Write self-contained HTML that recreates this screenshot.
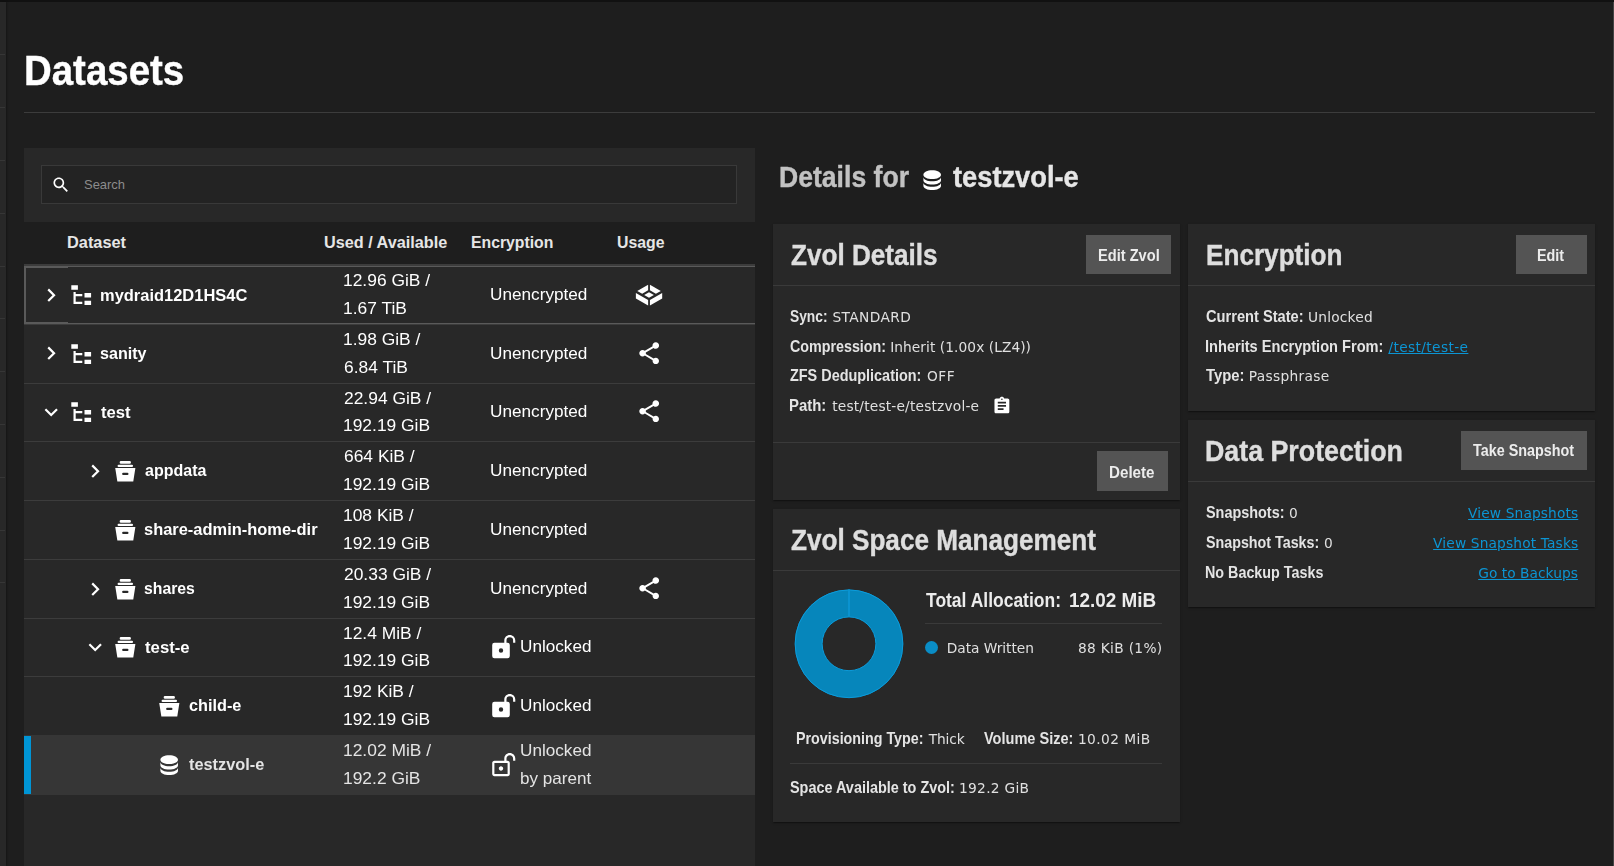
<!DOCTYPE html>
<html lang="en">
<head>
<meta charset="utf-8">
<title>Datasets - TrueNAS</title>
<style>

html,body{margin:0;padding:0}
body{width:1614px;height:866px;overflow:hidden;background:#1e1e1e;position:relative;font-family:"Liberation Sans",sans-serif;color:#fff}
.abs,.t,svg.i{position:absolute}
#txt{position:absolute;left:0;top:0;width:1614px;height:866px;will-change:transform}
.t{white-space:nowrap;line-height:normal;margin:0;transform-origin:0 0;display:block}
h1.t,h2.t,h3.t{font-weight:700;-webkit-text-stroke:.4px currentColor}
.b{-webkit-text-stroke:.2px currentColor}
svg.i{fill:#fff;overflow:visible}
.card{position:absolute;background:#282828;box-shadow:0 2px 1px -1px rgba(0,0,0,.2),0 1px 1px 0 rgba(0,0,0,.14),0 1px 3px 0 rgba(0,0,0,.12)}
.hr{position:absolute;height:1px;background:#3a3a3a}
.btn{position:absolute;background:#545454;border:0;padding:0;margin:0}
.row{position:absolute;left:24px;width:731px}
.sep{position:absolute;left:24px;width:731px;height:1px;background:#3c3c3c}

</style>
</head>
<body>
<div class="abs" style="left:0px;top:0px;width:1614px;height:2px;background:#111;"></div>
<div class="abs" style="left:0px;top:2px;width:6px;height:864px;background:#282828;box-shadow:1px 0 2px rgba(0,0,0,.28);"></div>
<div class="abs" style="left:0px;top:54px;width:5px;height:1px;background:#363636;"></div>
<div class="abs" style="left:0px;top:107px;width:5px;height:1px;background:#363636;"></div>
<div class="abs" style="left:0px;top:160px;width:5px;height:1px;background:#363636;"></div>
<div class="abs" style="left:0px;top:213px;width:5px;height:1px;background:#363636;"></div>
<div class="abs" style="left:0px;top:266px;width:5px;height:1px;background:#363636;"></div>
<div class="abs" style="left:0px;top:318px;width:5px;height:1px;background:#363636;"></div>
<div class="abs" style="left:0px;top:371px;width:5px;height:1px;background:#363636;"></div>
<div class="abs" style="left:0px;top:424px;width:5px;height:1px;background:#363636;"></div>
<div class="abs" style="left:0px;top:477px;width:5px;height:1px;background:#363636;"></div>
<div class="abs" style="left:0px;top:530px;width:5px;height:1px;background:#363636;"></div>
<div class="abs" style="left:0px;top:582px;width:5px;height:1px;background:#363636;"></div>
<div class="abs" style="left:1613px;top:2px;width:1px;height:864px;background:#444;"></div>
<div class="abs" style="left:24px;top:112px;width:1571px;height:1px;background:#3c3c3c;"></div>
<div class="abs" style="left:24px;top:148px;width:731px;height:718px;background:#282828;"></div>
<div class="abs" style="left:41px;top:165px;width:694px;height:37px;background:#232323;border:1px solid #393939;"></div>
<div class="abs" style="left:24px;top:222px;width:731px;height:42px;background:#1e1e1e;"></div>
<div class="abs" style="left:24px;top:264px;width:731px;height:2px;background:#3c3c3c;"></div>
<div class="abs" style="left:24px;top:324px;width:731px;height:1px;background:#3c3c3c;"></div>
<div class="abs" style="left:24px;top:383px;width:731px;height:1px;background:#3c3c3c;"></div>
<div class="abs" style="left:24px;top:441px;width:731px;height:1px;background:#3c3c3c;"></div>
<div class="abs" style="left:24px;top:500px;width:731px;height:1px;background:#3c3c3c;"></div>
<div class="abs" style="left:24px;top:559px;width:731px;height:1px;background:#3c3c3c;"></div>
<div class="abs" style="left:24px;top:618px;width:731px;height:1px;background:#3c3c3c;"></div>
<div class="abs" style="left:24px;top:676px;width:731px;height:1px;background:#3c3c3c;"></div>
<div class="abs" style="left:24px;top:266px;width:731px;height:1px;background:#5a5a5a;"></div>
<div class="abs" style="left:24px;top:267px;width:44px;height:1px;background:#5a5a5a;"></div>
<div class="abs" style="left:24px;top:266px;width:2px;height:58px;background:#5a5a5a;"></div>
<div class="abs" style="left:24px;top:323px;width:731px;height:1px;background:#5a5a5a;"></div>
<div class="abs" style="left:24px;top:322px;width:44px;height:1px;background:#5a5a5a;"></div>
<div class="abs" style="left:24px;top:735px;width:731px;height:60px;background:#363636;"></div>
<div class="abs" style="left:24px;top:736px;width:7px;height:58px;background:#0095d5;"></div>
<div class="card" style="left:773px;top:224px;width:407px;height:276px"></div>
<div class="card" style="left:773px;top:509px;width:407px;height:312.5px"></div>
<div class="card" style="left:1188px;top:224px;width:407px;height:186.5px"></div>
<div class="card" style="left:1188px;top:420px;width:407px;height:186.5px"></div>
<div class="abs" style="left:773px;top:285px;width:407px;height:1px;background:#3a3a3a;"></div>
<div class="abs" style="left:773px;top:442px;width:407px;height:1px;background:#3a3a3a;"></div>
<div class="abs" style="left:773px;top:570px;width:407px;height:1px;background:#3a3a3a;"></div>
<div class="abs" style="left:1188px;top:285px;width:407px;height:1px;background:#3a3a3a;"></div>
<div class="abs" style="left:1188px;top:481px;width:407px;height:1px;background:#3a3a3a;"></div>
<div class="abs" style="left:925px;top:623px;width:237px;height:1px;background:#3a3a3a;"></div>
<div class="abs" style="left:790px;top:763px;width:372px;height:1px;background:#3a3a3a;"></div>
<div class="abs" style="left:1086px;top:235px;width:85px;height:39px;background:#545454;"></div>
<div class="abs" style="left:1516px;top:235px;width:71px;height:39px;background:#545454;"></div>
<div class="abs" style="left:1461px;top:431px;width:126px;height:39px;background:#545454;"></div>
<div class="abs" style="left:1097px;top:451px;width:71px;height:40px;background:#545454;"></div>
<svg class="i" style="left:51.00px;top:174.90px" width="19.8" height="19.8" viewBox="0 0 24 24" fill="#fff"><path fill-rule="evenodd" d="M15.5 14h-.79l-.28-.27C15.41 12.59 16 11.11 16 9.5 16 5.91 13.09 3 9.5 3S3 5.91 3 9.5 5.91 16 9.5 16c1.61 0 3.09-.59 4.23-1.57l.27.28v.79l5 4.99L20.49 19l-4.99-5zm-6 0C7.01 14 5 11.99 5 9.5S7.01 5 9.5 5 14 7.01 14 9.5 11.99 14 9.5 14z"/></svg>
<svg class="i" style="left:37.90px;top:281.70px" width="26.4" height="26.4" viewBox="0 0 24 24" fill="#fff"><path fill-rule="evenodd" d="M10 6L8.59 7.41 13.17 12l-4.58 4.59L10 18l6-6z"/></svg>
<svg class="i" style="left:67.70px;top:282.20px" width="26.4" height="26.4" viewBox="0 0 24 24" fill="#fff"><path fill-rule="evenodd" d="M3,3H9V7H3V3M15,10H21V14H15V10M15,17H21V21H15V17M13,13H7V18H13V20H7L5,20V9H7V11H13V13Z"/></svg>
<svg class="i" style="left:37.90px;top:339.70px" width="26.4" height="26.4" viewBox="0 0 24 24" fill="#fff"><path fill-rule="evenodd" d="M10 6L8.59 7.41 13.17 12l-4.58 4.59L10 18l6-6z"/></svg>
<svg class="i" style="left:67.70px;top:341.20px" width="26.4" height="26.4" viewBox="0 0 24 24" fill="#fff"><path fill-rule="evenodd" d="M3,3H9V7H3V3M15,10H21V14H15V10M15,17H21V21H15V17M13,13H7V18H13V20H7L5,20V9H7V11H13V13Z"/></svg>
<svg class="i" style="left:635.80px;top:339.80px" width="26.4" height="26.4" viewBox="0 0 24 24" fill="#fff"><path fill-rule="evenodd" d="M18 16.08c-.76 0-1.44.3-1.96.77L8.91 12.7c.05-.23.09-.46.09-.7s-.04-.47-.09-.7l7.05-4.11c.54.5 1.25.81 2.04.81 1.66 0 3-1.34 3-3s-1.34-3-3-3-3 1.34-3 3c0 .24.04.47.09.7L8.04 9.81C7.5 9.31 6.79 9 6 9c-1.66 0-3 1.34-3 3s1.34 3 3 3c.79 0 1.5-.31 2.04-.81l7.12 4.16c-.05.21-.08.43-.08.65 0 1.61 1.31 2.92 2.92 2.92 1.61 0 2.92-1.31 2.92-2.92s-1.31-2.92-2.92-2.92z"/></svg>
<svg class="i" style="left:37.90px;top:398.70px" width="26.4" height="26.4" viewBox="0 0 24 24" fill="#fff"><path fill-rule="evenodd" d="M16.59 8.59L12 13.17 7.41 8.59 6 10l6 6 6-6z"/></svg>
<svg class="i" style="left:67.70px;top:399.20px" width="26.4" height="26.4" viewBox="0 0 24 24" fill="#fff"><path fill-rule="evenodd" d="M3,3H9V7H3V3M15,10H21V14H15V10M15,17H21V21H15V17M13,13H7V18H13V20H7L5,20V9H7V11H13V13Z"/></svg>
<svg class="i" style="left:635.80px;top:397.80px" width="26.4" height="26.4" viewBox="0 0 24 24" fill="#fff"><path fill-rule="evenodd" d="M18 16.08c-.76 0-1.44.3-1.96.77L8.91 12.7c.05-.23.09-.46.09-.7s-.04-.47-.09-.7l7.05-4.11c.54.5 1.25.81 2.04.81 1.66 0 3-1.34 3-3s-1.34-3-3-3-3 1.34-3 3c0 .24.04.47.09.7L8.04 9.81C7.5 9.31 6.79 9 6 9c-1.66 0-3 1.34-3 3s1.34 3 3 3c.79 0 1.5-.31 2.04-.81l7.12 4.16c-.05.21-.08.43-.08.65 0 1.61 1.31 2.92 2.92 2.92 1.61 0 2.92-1.31 2.92-2.92s-1.31-2.92-2.92-2.92z"/></svg>
<svg class="i" style="left:82.00px;top:457.70px" width="26.4" height="26.4" viewBox="0 0 24 24" fill="#fff"><path fill-rule="evenodd" d="M10 6L8.59 7.41 13.17 12l-4.58 4.59L10 18l6-6z"/></svg>
<svg class="i" style="left:111.80px;top:457.50px" width="26.4" height="26.4" viewBox="0 0 24 24" fill="#fff"><path fill-rule="evenodd" d="M8.2 2.8h7.8a1.25 1.25 0 0 1 0 2.5H8.2a1.25 1.25 0 0 1 0-2.5zM6.1 6.15h12a1.05 1.05 0 0 1 0 2.1h-12a1.05 1.05 0 0 1 0-2.1zM2.93 9.1h18.34l-1.93 12.2H4.86zM10.2 13.45a1 1 0 0 0 0 2h3.8a1 1 0 0 0 0-2z"/></svg>
<svg class="i" style="left:111.80px;top:516.50px" width="26.4" height="26.4" viewBox="0 0 24 24" fill="#fff"><path fill-rule="evenodd" d="M8.2 2.8h7.8a1.25 1.25 0 0 1 0 2.5H8.2a1.25 1.25 0 0 1 0-2.5zM6.1 6.15h12a1.05 1.05 0 0 1 0 2.1h-12a1.05 1.05 0 0 1 0-2.1zM2.93 9.1h18.34l-1.93 12.2H4.86zM10.2 13.45a1 1 0 0 0 0 2h3.8a1 1 0 0 0 0-2z"/></svg>
<svg class="i" style="left:82.00px;top:575.70px" width="26.4" height="26.4" viewBox="0 0 24 24" fill="#fff"><path fill-rule="evenodd" d="M10 6L8.59 7.41 13.17 12l-4.58 4.59L10 18l6-6z"/></svg>
<svg class="i" style="left:111.80px;top:575.50px" width="26.4" height="26.4" viewBox="0 0 24 24" fill="#fff"><path fill-rule="evenodd" d="M8.2 2.8h7.8a1.25 1.25 0 0 1 0 2.5H8.2a1.25 1.25 0 0 1 0-2.5zM6.1 6.15h12a1.05 1.05 0 0 1 0 2.1h-12a1.05 1.05 0 0 1 0-2.1zM2.93 9.1h18.34l-1.93 12.2H4.86zM10.2 13.45a1 1 0 0 0 0 2h3.8a1 1 0 0 0 0-2z"/></svg>
<svg class="i" style="left:635.80px;top:574.80px" width="26.4" height="26.4" viewBox="0 0 24 24" fill="#fff"><path fill-rule="evenodd" d="M18 16.08c-.76 0-1.44.3-1.96.77L8.91 12.7c.05-.23.09-.46.09-.7s-.04-.47-.09-.7l7.05-4.11c.54.5 1.25.81 2.04.81 1.66 0 3-1.34 3-3s-1.34-3-3-3-3 1.34-3 3c0 .24.04.47.09.7L8.04 9.81C7.5 9.31 6.79 9 6 9c-1.66 0-3 1.34-3 3s1.34 3 3 3c.79 0 1.5-.31 2.04-.81l7.12 4.16c-.05.21-.08.43-.08.65 0 1.61 1.31 2.92 2.92 2.92 1.61 0 2.92-1.31 2.92-2.92s-1.31-2.92-2.92-2.92z"/></svg>
<svg class="i" style="left:82.00px;top:633.70px" width="26.4" height="26.4" viewBox="0 0 24 24" fill="#fff"><path fill-rule="evenodd" d="M16.59 8.59L12 13.17 7.41 8.59 6 10l6 6 6-6z"/></svg>
<svg class="i" style="left:111.80px;top:633.50px" width="26.4" height="26.4" viewBox="0 0 24 24" fill="#fff"><path fill-rule="evenodd" d="M8.2 2.8h7.8a1.25 1.25 0 0 1 0 2.5H8.2a1.25 1.25 0 0 1 0-2.5zM6.1 6.15h12a1.05 1.05 0 0 1 0 2.1h-12a1.05 1.05 0 0 1 0-2.1zM2.93 9.1h18.34l-1.93 12.2H4.86zM10.2 13.45a1 1 0 0 0 0 2h3.8a1 1 0 0 0 0-2z"/></svg>
<svg class="i" style="left:489.80px;top:634.00px" width="26.4" height="26.4" viewBox="0 0 24 24" fill="#fff"><path fill-rule="evenodd" d="M18,1C15.24,1 13,3.24 13,6V8H4A2,2 0 0,0 2,10V20A2,2 0 0,0 4,22H16A2,2 0 0,0 18,20V10A2,2 0 0,0 16,8H15V6A3,3 0 0,1 18,3A3,3 0 0,1 21,6V8H23V6C23,3.24 20.76,1 18,1M10,13A2,2 0 0,1 12,15A2,2 0 0,1 10,17A2,2 0 0,1 8,15A2,2 0 0,1 10,13Z"/></svg>
<svg class="i" style="left:155.90px;top:692.50px" width="26.4" height="26.4" viewBox="0 0 24 24" fill="#fff"><path fill-rule="evenodd" d="M8.2 2.8h7.8a1.25 1.25 0 0 1 0 2.5H8.2a1.25 1.25 0 0 1 0-2.5zM6.1 6.15h12a1.05 1.05 0 0 1 0 2.1h-12a1.05 1.05 0 0 1 0-2.1zM2.93 9.1h18.34l-1.93 12.2H4.86zM10.2 13.45a1 1 0 0 0 0 2h3.8a1 1 0 0 0 0-2z"/></svg>
<svg class="i" style="left:489.80px;top:693.00px" width="26.4" height="26.4" viewBox="0 0 24 24" fill="#fff"><path fill-rule="evenodd" d="M18,1C15.24,1 13,3.24 13,6V8H4A2,2 0 0,0 2,10V20A2,2 0 0,0 4,22H16A2,2 0 0,0 18,20V10A2,2 0 0,0 16,8H15V6A3,3 0 0,1 18,3A3,3 0 0,1 21,6V8H23V6C23,3.24 20.76,1 18,1M10,13A2,2 0 0,1 12,15A2,2 0 0,1 10,17A2,2 0 0,1 8,15A2,2 0 0,1 10,13Z"/></svg>
<svg class="i" style="left:155.90px;top:751.70px" width="26.4" height="26.4" viewBox="0 0 24 24" fill="#e4e4e4"><path fill-rule="evenodd" d="M12,3C7.58,3 4,4.79 4,7C4,9.21 7.58,11 12,11C16.42,11 20,9.21 20,7C20,4.79 16.42,3 12,3M4,9V12C4,14.21 7.58,16 12,16C16.42,16 20,14.21 20,12V9C20,11.21 16.42,13 12,13C7.58,13 4,11.21 4,9M4,14V17C4,19.21 7.58,21 12,21C16.42,21 20,19.21 20,17V14C20,16.21 16.42,18 12,18C7.58,18 4,16.21 4,14Z"/></svg>
<svg class="i" style="left:489.80px;top:752.00px" width="26.4" height="26.4" viewBox="0 0 24 24" fill="#e4e4e4"><path fill-rule="evenodd" d="M10,13C11.1,13 12,13.89 12,15C12,16.11 11.11,17 10,17C8.9,17 8,16.11 8,15C8,13.9 8.9,13 10,13M18,1C15.24,1 13,3.24 13,6V8H4C2.9,8 2,8.9 2,10V20C2,21.1 2.9,22 4,22H16C17.1,22 18,21.1 18,20V10C18,8.9 17.1,8 16,8H15V6C15,4.34 16.34,3 18,3C19.66,3 21,4.34 21,6V8H23V6C23,3.24 20.76,1 18,1M16,10V20H4V10H16Z"/></svg>
<svg class="i" style="left:625px;top:275px" width="50" height="40" viewBox="0 0 50 40" fill="#fff"><polygon points="12.25,16.08 23.1,9.8 23.1,15.25 17.19,18.67"/><polygon points="35.8,16.08 24.95,9.8 24.95,15.25 30.87,18.67"/><polygon points="19.2,20.1 24.03,17.2 28.9,20.1 24.03,22.87"/><polygon points="10.86,18.02 23.1,24.95 23.1,30.5 10.86,23.57"/><polygon points="37.2,18.02 24.95,24.95 24.95,30.5 37.2,23.57"/></svg>
<svg class="i" style="left:918.50px;top:167.10px" width="26.4" height="26.4" viewBox="0 0 24 24" fill="#e6e6e6"><path fill-rule="evenodd" d="M12,3C7.58,3 4,4.79 4,7C4,9.21 7.58,11 12,11C16.42,11 20,9.21 20,7C20,4.79 16.42,3 12,3M4,9V12C4,14.21 7.58,16 12,16C16.42,16 20,14.21 20,12V9C20,11.21 16.42,13 12,13C7.58,13 4,11.21 4,9M4,14V17C4,19.21 7.58,21 12,21C16.42,21 20,19.21 20,17V14C20,16.21 16.42,18 12,18C7.58,18 4,16.21 4,14Z"/></svg>
<svg class="i" style="left:991.60px;top:396.20px" width="19.8" height="19.8" viewBox="0 0 24 24" fill="#e6e6e6"><path fill-rule="evenodd" d="M19 3h-4.18C14.4 1.84 13.3 1 12 1c-1.3 0-2.4.84-2.82 2H5c-1.1 0-2 .9-2 2v14c0 1.1.9 2 2 2h14c1.1 0 2-.9 2-2V5c0-1.1-.9-2-2-2zm-7 0c.55 0 1 .45 1 1s-.45 1-1 1-1-.45-1-1 .45-1 1-1zm2 14H7v-2h7v2zm3-4H7v-2h10v2zm0-4H7V7h10v2z"/></svg>
<svg class="i" style="left:789px;top:584px" width="120" height="120" viewBox="0 0 120 120"><circle cx="60" cy="59.8" r="40.45" fill="none" stroke="#0686bb" stroke-width="27.1"/><circle cx="60" cy="59.8" r="53.9" fill="none" stroke="#0b9cdc" stroke-width="1"/><circle cx="60" cy="59.8" r="26.9" fill="none" stroke="#0b9cdc" stroke-width="1"/><rect x="59" y="5.5" width="2" height="27.4" fill="#0a93d0"/></svg>
<svg class="i" style="left:924.8px;top:641.1px" width="13" height="13" viewBox="0 0 13 13"><circle cx="6.5" cy="6.5" r="6.5" fill="#0a8dc6"/></svg>
<span class="t" style="left:83.6px;top:177px;font-size:13.3px;color:#8c8c8c;transform:scaleX(0.9738);">Search</span>
<span class="t" style="left:66.8px;top:233px;font-size:17px;font-weight:700;color:#e6e6e6;transform:scaleX(0.9607);">Dataset</span>
<span class="t" style="left:323.9px;top:233px;font-size:17px;font-weight:700;color:#e6e6e6;transform:scaleX(0.9547);">Used / Available</span>
<span class="t" style="left:470.7px;top:233px;font-size:17px;font-weight:700;color:#e6e6e6;transform:scaleX(0.9276);">Encryption</span>
<span class="t" style="left:616.8px;top:233px;font-size:17px;font-weight:700;color:#e6e6e6;transform:scaleX(0.9300);">Usage</span>
<div id="txt">
<h1 class="t" style="left:24.3px;top:47px;font-size:42.5px;transform:scaleX(0.9040);">Datasets</h1>
<span class="t" style="left:99.9px;top:286px;font-size:17px;font-weight:700;transform:scaleX(0.9682);">mydraid12D1HS4C</span>
<span class="t" style="left:342.9px;top:271px;font-size:16.5px;transform:scaleX(1.055);">12.96 GiB /</span>
<span class="t" style="left:342.9px;top:299px;font-size:16.5px;transform:scaleX(1.055);">1.67 TiB</span>
<span class="t" style="left:490.0px;top:285px;font-size:16.5px;transform:scaleX(1.0413);">Unencrypted</span>
<span class="t" style="left:100.0px;top:344px;font-size:17px;font-weight:700;transform:scaleX(0.9479);">sanity</span>
<span class="t" style="left:342.9px;top:330px;font-size:16.5px;transform:scaleX(1.055);">1.98 GiB /</span>
<span class="t" style="left:344.0px;top:358px;font-size:16.5px;transform:scaleX(1.055);">6.84 TiB</span>
<span class="t" style="left:490.0px;top:344px;font-size:16.5px;transform:scaleX(1.0413);">Unencrypted</span>
<span class="t" style="left:100.9px;top:403px;font-size:17px;font-weight:700;transform:scaleX(0.9800);">test</span>
<span class="t" style="left:344.0px;top:389px;font-size:16.5px;transform:scaleX(1.055);">22.94 GiB /</span>
<span class="t" style="left:342.9px;top:416px;font-size:16.5px;transform:scaleX(1.055);">192.19 GiB</span>
<span class="t" style="left:490.0px;top:402px;font-size:16.5px;transform:scaleX(1.0413);">Unencrypted</span>
<span class="t" style="left:145.0px;top:461px;font-size:17px;font-weight:700;transform:scaleX(0.9424);">appdata</span>
<span class="t" style="left:344.0px;top:447px;font-size:16.5px;transform:scaleX(1.055);">664 KiB /</span>
<span class="t" style="left:342.9px;top:475px;font-size:16.5px;transform:scaleX(1.055);">192.19 GiB</span>
<span class="t" style="left:490.0px;top:461px;font-size:16.5px;transform:scaleX(1.0413);">Unencrypted</span>
<span class="t" style="left:144.0px;top:520px;font-size:17px;font-weight:700;transform:scaleX(0.9670);">share-admin-home-dir</span>
<span class="t" style="left:342.9px;top:506px;font-size:16.5px;transform:scaleX(1.055);">108 KiB /</span>
<span class="t" style="left:342.9px;top:534px;font-size:16.5px;transform:scaleX(1.055);">192.19 GiB</span>
<span class="t" style="left:490.0px;top:520px;font-size:16.5px;transform:scaleX(1.0413);">Unencrypted</span>
<span class="t" style="left:144.1px;top:579px;font-size:17px;font-weight:700;transform:scaleX(0.9278);">shares</span>
<span class="t" style="left:344.0px;top:565px;font-size:16.5px;transform:scaleX(1.055);">20.33 GiB /</span>
<span class="t" style="left:342.9px;top:593px;font-size:16.5px;transform:scaleX(1.055);">192.19 GiB</span>
<span class="t" style="left:490.0px;top:579px;font-size:16.5px;transform:scaleX(1.0413);">Unencrypted</span>
<span class="t" style="left:145.0px;top:638px;font-size:17px;font-weight:700;transform:scaleX(0.9844);">test-e</span>
<span class="t" style="left:342.9px;top:624px;font-size:16.5px;transform:scaleX(1.055);">12.4 MiB /</span>
<span class="t" style="left:342.9px;top:651px;font-size:16.5px;transform:scaleX(1.055);">192.19 GiB</span>
<span class="t" style="left:520.3px;top:637px;font-size:16.5px;transform:scaleX(1.0388);">Unlocked</span>
<span class="t" style="left:189.1px;top:696px;font-size:17px;font-weight:700;transform:scaleX(0.9564);">child-e</span>
<span class="t" style="left:342.9px;top:682px;font-size:16.5px;transform:scaleX(1.055);">192 KiB /</span>
<span class="t" style="left:342.9px;top:710px;font-size:16.5px;transform:scaleX(1.055);">192.19 GiB</span>
<span class="t" style="left:520.3px;top:696px;font-size:16.5px;transform:scaleX(1.0388);">Unlocked</span>
<span class="t" style="left:189.1px;top:755px;font-size:17px;font-weight:700;color:#e4e4e4;transform:scaleX(0.9603);">testzvol-e</span>
<span class="t" style="left:342.9px;top:741px;font-size:16.5px;color:#e4e4e4;transform:scaleX(1.055);">12.02 MiB /</span>
<span class="t" style="left:342.9px;top:769px;font-size:16.5px;color:#e4e4e4;transform:scaleX(1.055);">192.2 GiB</span>
<span class="t" style="left:520.3px;top:741px;font-size:16.5px;color:#e4e4e4;transform:scaleX(1.0388);">Unlocked</span>
<span class="t" style="left:520.3px;top:769px;font-size:16.5px;color:#e4e4e4;transform:scaleX(1.0338);">by parent</span>
<h2 class="t" style="left:778.9px;top:161px;font-size:29.2px;color:#c2c2c2;transform:scaleX(0.9106);">Details for</h2>
<h2 class="t" style="left:953.1px;top:161px;font-size:29.2px;color:#e6e6e6;transform:scaleX(0.9336);">testzvol-e</h2>
<h3 class="t" style="left:790.9px;top:239px;font-size:29.2px;color:#dedede;transform:scaleX(0.8945);">Zvol Details</h3>
<h3 class="t" style="left:1205.6px;top:239px;font-size:29.2px;color:#dedede;transform:scaleX(0.8953);">Encryption</h3>
<h3 class="t" style="left:1205.4px;top:435px;font-size:29.2px;color:#dedede;transform:scaleX(0.9175);">Data Protection</h3>
<h3 class="t" style="left:791.3px;top:524px;font-size:29.2px;color:#dedede;transform:scaleX(0.8953);">Zvol Space Management</h3>
<span class="t" style="left:1097.7px;top:246px;font-size:16.6px;font-weight:700;color:#ececec;transform:scaleX(0.8809);">Edit Zvol</span>
<span class="t" style="left:1537.3px;top:246px;font-size:16.6px;font-weight:700;color:#ececec;transform:scaleX(0.8645);">Edit</span>
<span class="t" style="left:1473.3px;top:441px;font-size:16.6px;font-weight:700;color:#ececec;transform:scaleX(0.8650);">Take Snapshot</span>
<span class="t" style="left:1109.1px;top:463px;font-size:16.3px;font-weight:700;color:#ececec;transform:scaleX(0.9313);">Delete</span>
<span class="t" style="left:790.2px;top:307px;font-size:16.4px;font-weight:700;color:#e4e4e4;transform:scaleX(0.8409);">Sync:</span>
<span class="t" style="left:832.5px;top:309px;font-family:&quot;DejaVu Sans&quot;, &quot;Liberation Sans&quot;, sans-serif;font-size:13.75px;color:#e0e0e0;letter-spacing:0.371px;">STANDARD</span>
<span class="t" style="left:790.2px;top:337px;font-size:16.4px;font-weight:700;color:#e4e4e4;transform:scaleX(0.8716);">Compression:</span>
<span class="t" style="left:890.2px;top:339px;font-family:&quot;DejaVu Sans&quot;, &quot;Liberation Sans&quot;, sans-serif;font-size:13.75px;color:#e0e0e0;letter-spacing:0.060px;">Inherit (1.00x (LZ4))</span>
<span class="t" style="left:790.2px;top:366px;font-size:16.4px;font-weight:700;color:#e4e4e4;transform:scaleX(0.8797);">ZFS Deduplication:</span>
<span class="t" style="left:926.9px;top:368px;font-family:&quot;DejaVu Sans&quot;, &quot;Liberation Sans&quot;, sans-serif;font-size:13.75px;color:#e0e0e0;letter-spacing:0.550px;">OFF</span>
<span class="t" style="left:789.3px;top:396px;font-size:16.4px;font-weight:700;color:#e4e4e4;transform:scaleX(0.9103);">Path:</span>
<span class="t" style="left:832.2px;top:398px;font-family:&quot;DejaVu Sans&quot;, &quot;Liberation Sans&quot;, sans-serif;font-size:13.75px;color:#e0e0e0;letter-spacing:0.186px;">test/test-e/testzvol-e</span>
<span class="t" style="left:1205.9px;top:307px;font-size:16.4px;font-weight:700;color:#e4e4e4;transform:scaleX(0.8935);">Current State:</span>
<span class="t" style="left:1307.9px;top:309px;font-family:&quot;DejaVu Sans&quot;, &quot;Liberation Sans&quot;, sans-serif;font-size:13.75px;color:#e0e0e0;letter-spacing:0.229px;">Unlocked</span>
<span class="t" style="left:1205.0px;top:337px;font-size:16.4px;font-weight:700;color:#e4e4e4;transform:scaleX(0.8904);">Inherits Encryption From:</span>
<span class="t" style="left:1388.4px;top:339px;font-family:&quot;DejaVu Sans&quot;, &quot;Liberation Sans&quot;, sans-serif;font-size:13.75px;color:#0c95d3;letter-spacing:0.373px;text-decoration:underline;">/test/test-e</span>
<span class="t" style="left:1205.9px;top:366px;font-size:16.4px;font-weight:700;color:#e4e4e4;transform:scaleX(0.9049);">Type:</span>
<span class="t" style="left:1248.7px;top:368px;font-family:&quot;DejaVu Sans&quot;, &quot;Liberation Sans&quot;, sans-serif;font-size:13.75px;color:#e0e0e0;letter-spacing:0.333px;">Passphrase</span>
<span class="t" style="left:1205.9px;top:503px;font-size:16.4px;font-weight:700;color:#e4e4e4;transform:scaleX(0.8795);">Snapshots:</span>
<span class="t" style="left:1289.0px;top:505px;font-family:&quot;DejaVu Sans&quot;, &quot;Liberation Sans&quot;, sans-serif;font-size:13.75px;color:#e0e0e0;">0</span>
<span class="t" style="left:1205.9px;top:533px;font-size:16.4px;font-weight:700;color:#e4e4e4;transform:scaleX(0.8713);">Snapshot Tasks:</span>
<span class="t" style="left:1324.0px;top:535px;font-family:&quot;DejaVu Sans&quot;, &quot;Liberation Sans&quot;, sans-serif;font-size:13.75px;color:#e0e0e0;">0</span>
<span class="t" style="left:1205.0px;top:563px;font-size:16.4px;font-weight:700;color:#e4e4e4;transform:scaleX(0.8739);">No Backup Tasks</span>
<span class="t" style="left:1468.1px;top:505px;font-family:&quot;DejaVu Sans&quot;, &quot;Liberation Sans&quot;, sans-serif;font-size:13.75px;color:#0c95d3;letter-spacing:0.123px;text-decoration:underline;">View Snapshots</span>
<span class="t" style="left:1433.1px;top:535px;font-family:&quot;DejaVu Sans&quot;, &quot;Liberation Sans&quot;, sans-serif;font-size:13.75px;color:#0c95d3;letter-spacing:0.144px;text-decoration:underline;">View Snapshot Tasks</span>
<span class="t" style="left:1478.2px;top:565px;font-family:&quot;DejaVu Sans&quot;, &quot;Liberation Sans&quot;, sans-serif;font-size:13.75px;color:#0c95d3;letter-spacing:0.042px;text-decoration:underline;">Go to Backups</span>
<span class="t" style="left:925.6px;top:589px;font-size:19.6px;font-weight:700;color:#ececec;transform:scaleX(0.8920);">Total Allocation:</span>
<span class="t" style="left:1068.8px;top:589px;font-size:19.6px;font-weight:700;color:#ececec;transform:scaleX(0.9640);">12.02 MiB</span>
<span class="t" style="left:946.7px;top:640px;font-family:&quot;DejaVu Sans&quot;, &quot;Liberation Sans&quot;, sans-serif;font-size:13.75px;color:#e0e0e0;letter-spacing:-0.036px;">Data Written</span>
<span class="t" style="left:1077.9px;top:640px;font-family:&quot;DejaVu Sans&quot;, &quot;Liberation Sans&quot;, sans-serif;font-size:13.75px;color:#e0e0e0;letter-spacing:0.320px;">88 KiB (1%)</span>
<span class="t" style="left:795.9px;top:729px;font-size:16.4px;font-weight:700;color:#e4e4e4;transform:scaleX(0.8708);">Provisioning Type:</span>
<span class="t" style="left:928.7px;top:731px;font-family:&quot;DejaVu Sans&quot;, &quot;Liberation Sans&quot;, sans-serif;font-size:13.75px;color:#e0e0e0;letter-spacing:-0.125px;">Thick</span>
<span class="t" style="left:983.9px;top:729px;font-size:16.4px;font-weight:700;color:#e4e4e4;transform:scaleX(0.8870);">Volume Size:</span>
<span class="t" style="left:1077.9px;top:731px;font-family:&quot;DejaVu Sans&quot;, &quot;Liberation Sans&quot;, sans-serif;font-size:13.75px;color:#e0e0e0;letter-spacing:0.438px;">10.02 MiB</span>
<span class="t" style="left:790.3px;top:778px;font-size:16.4px;font-weight:700;color:#e4e4e4;transform:scaleX(0.8801);">Space Available to Zvol:</span>
<span class="t" style="left:959.0px;top:780px;font-family:&quot;DejaVu Sans&quot;, &quot;Liberation Sans&quot;, sans-serif;font-size:13.75px;color:#e0e0e0;letter-spacing:0.300px;">192.2 GiB</span>
</div>
</body>
</html>
